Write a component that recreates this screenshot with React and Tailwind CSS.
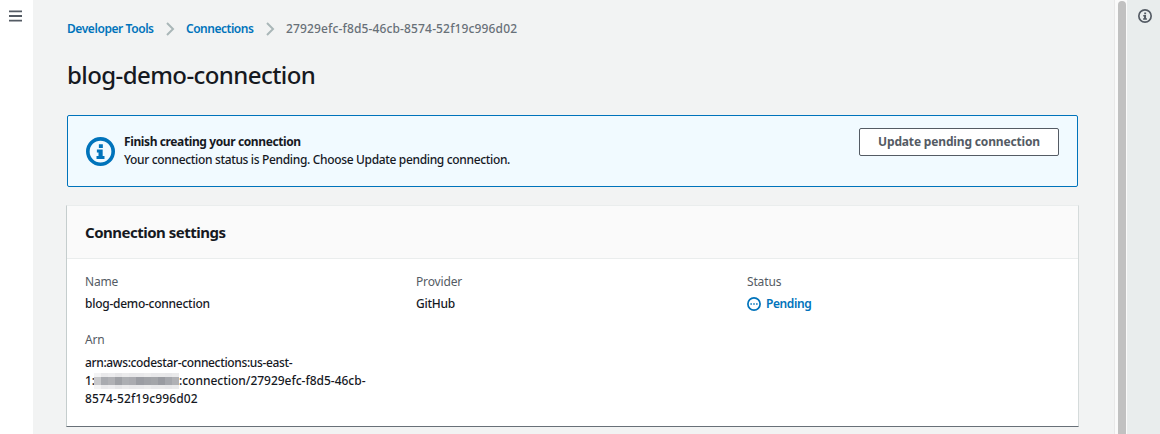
import React from "react";

function MenuIcon() {
  return (
    <svg width="13" height="12" viewBox="0 0 13 12" stroke="#545b64" strokeWidth="1.8">
      <path d="M0 1.3H13M0 6H13M0 10.7H13" />
    </svg>
  );
}

function Chevron() {
  return (
    <svg className="shrink-0" width="9" height="14" viewBox="0 0 9 14" fill="none" stroke="#aab7b8" strokeWidth="2">
      <path d="M1 1L7 7L1 13" />
    </svg>
  );
}

function InfoIcon({ size, color, stroke }) {
  return (
    <svg className="shrink-0" width={size} height={size} viewBox="0 0 16 16" fill="none">
      <circle cx="8" cy="8" r={8 - stroke / 2} stroke={color} strokeWidth={stroke} />
      <path d="M7.1 4H9.3V6H7.1ZM6 6.9H9.2V10.5H10.2V12.2H5.8V10.5H6.9V8.5H6Z" fill={color} />
    </svg>
  );
}

function PendingIcon() {
  return (
    <svg className="shrink-0" width="14" height="14" viewBox="0 0 14 14" fill="none">
      <circle cx="7" cy="7" r="6.1" stroke="#0073bb" strokeWidth="1.7" />
      <path d="M3.4 6.3H4.9V7.7H3.4ZM6.25 6.3H7.75V7.7H6.25ZM9.1 6.3H10.6V7.7H9.1Z" fill="#0073bb" />
    </svg>
  );
}

const maskTop = ["bg-[#f3f3f4]", "bg-[#e9e9eb]", "bg-[#ececee]", "bg-[#e6e6e8]", "bg-[#ebebec]", "bg-[#e8e8ea]", "bg-[#e9e9eb]", "bg-[#ececed]", "bg-[#e8e8ea]", "bg-[#e9e9ea]", "bg-[#e7e7e9]", "bg-[#eaeaeb]"];
const maskMiddle = ["bg-[#c8c9cc]", "bg-[#a9abb0]", "bg-[#b0b1b5]", "bg-[#9fa1a6]", "bg-[#adafb3]", "bg-[#aaabb0]", "bg-[#9b9da3]", "bg-[#a0a2a7]", "bg-[#a3a5a9]", "bg-[#999ba1]", "bg-[#a5a7ac]", "bg-[#b0b1b5]"];

function MaskRow({ colors, height }) {
  return (
    <span className={`flex ${height}`}>
      {colors.map((c, i) => (
        <span key={i} className={`flex-1 ${c}`} />
      ))}
    </span>
  );
}

function MaskedAccount() {
  return (
    <span className="flex h-4 w-[85px] shrink-0 flex-col">
      <MaskRow colors={maskTop} height="h-1" />
      <MaskRow colors={maskMiddle} height="h-2" />
      <MaskRow colors={maskTop} height="h-1" />
    </span>
  );
}

function Field({ label, children }) {
  return (
    <div>
      <div className="h-[18px] tracking-[-0.15px] text-[#545b64]">{label}</div>
      <div className="mt-1 font-medium tracking-[-0.26px]">{children}</div>
    </div>
  );
}

export default function App() {
  return (
    <div className="flex h-[434px] w-[1160px] overflow-hidden bg-[#f2f3f3] font-['Noto_Sans','Open_Sans',sans-serif] text-[12px] leading-[18px] text-[#16191f]">
      <aside className="w-[33px] shrink-0 bg-white pt-[10px] pl-[9px]">
        <MenuIcon />
      </aside>

      <main className="w-[1081px] shrink-0 pt-5 pl-[34px]">
        <nav className="flex h-[18px] items-center font-medium whitespace-nowrap text-[#0073bb]">
          <a className="w-[99px] font-semibold tracking-[-0.42px]">Developer Tools</a>
          <Chevron />
          <a className="ml-[11px] w-[80px] font-semibold tracking-[-0.48px]">Connections</a>
          <Chevron />
          <span className="ml-[11px] tracking-[0.14px] text-[#687078]">27929efc-f8d5-46cb-8574-52f19c996d02</span>
        </nav>

        <h1 className="mt-[19px] h-[36px] text-[24px] leading-[36px] font-medium tracking-[-0.58px] whitespace-nowrap">blog-demo-connection</h1>

        <section className="mt-[22px] flex h-[72px] w-[1011px] rounded-[2px] border border-[#0073bb] bg-[#f1faff] pl-[18px]">
          <div className="pt-[21px]">
            <InfoIcon size={29} color="#0073bb" stroke={2} />
          </div>
          <div className="ml-[9px] flex-1 pt-[17px] whitespace-nowrap">
            <div className="font-bold tracking-[-0.39px]">Finish creating your connection</div>
            <div className="font-medium tracking-[-0.34px]">Your connection status is Pending. Choose Update pending connection.</div>
          </div>
          <button className="mt-3 mr-[18px] h-[28px] w-[200px] rounded-[2px] border border-[#545b64] bg-white font-bold tracking-[-0.16px] whitespace-nowrap text-[#545b64]">
            Update pending connection
          </button>
        </section>

        <section className="mt-[18px] -ml-px h-[222px] w-[1013px] border border-t-[#eaeded] border-r-[#d5dbdb] border-b-[#687078] border-l-[#c5cdcd] bg-white">
          <header className="flex h-[53px] items-center border-b border-[#eaeded] bg-[#fafafa] pl-[18px]">
            <h2 className="text-[15px] leading-[22px] font-bold tracking-[-0.5px]">Connection settings</h2>
          </header>
          <div className="grid grid-cols-[331px_331px_1fr] gap-y-[18px] pt-[14px] pl-[18px] whitespace-nowrap">
            <Field label="Name">blog-demo-connection</Field>
            <Field label="Provider">GitHub</Field>
            <Field label="Status">
              <span className="flex items-center gap-[5px] font-semibold tracking-[-0.4px] text-[#0073bb]">
                <PendingIcon />
                Pending
              </span>
            </Field>
            <Field label="Arn">
              <div className="pt-px tracking-[-0.35px]">arn:aws:codestar-connections:us-east-</div>
              <div className="flex h-[18px] items-center tracking-[-0.02px]">
                <span className="w-[9px]">1:</span>
                <MaskedAccount />
                <span>:connection/27929efc-f8d5-46cb-</span>
              </div>
              <div className="tracking-[0.12px]">8574-52f19c996d02</div>
            </Field>
          </div>
        </section>
      </main>

      <div className="flex w-[13px] shrink-0 border-l border-[#e8e8e8] bg-[#fafafa] pt-px pl-[3px]">
        <div className="h-[440px] w-2 rounded-t-full bg-[#c1c1c1]" />
      </div>

      <aside className="flex-1 bg-[#e9eded] pt-[9px] pl-[11px]">
        <InfoIcon size={14} color="#545b64" stroke={1.9} />
      </aside>
    </div>
  );
}
